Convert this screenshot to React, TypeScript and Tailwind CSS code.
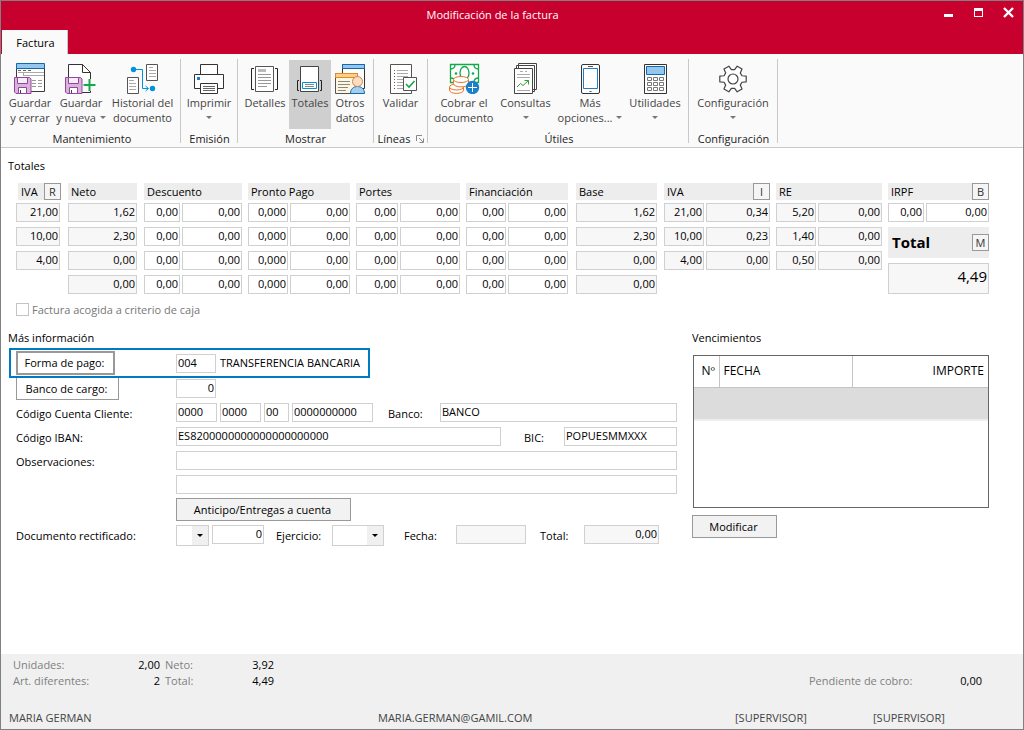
import type { ReactNode } from 'react';

const DROP = <span className="inline-block border-x-3 border-t-3 border-x-transparent border-t-[#777]" />;

// ---------- icons ----------

const Floppy = () => (
  <g>
    <path d="M.5 15.500h15l1.500 1.500v14.500H2L.5 30z" fill="#d9b3dc" stroke="#93479b" />
    <path d="M3.500 15.500h10v6h-10z" fill="#f6eef7" stroke="#93479b" />
    <path d="M4.500 25.500h8v6h-8z" fill="#fff" stroke="#93479b" />
    <path d="M6.500 28v3" stroke="#444" />
  </g>
);

const SaveCloseIcon = () => (
  <svg width="32" height="32" viewBox="0 0 32 32" fill="none">
    <path d="M2.500 6v23.500h28V6" fill="#fff" stroke="#3a3a3a" />
    <path d="M2.500 1.500h28v5h-28z" fill="#93c7ee" stroke="#1468ac" />
    <path d="M4 8.500h3m2 0h3m2 0h3" stroke="#666" />
    <path d="M4 10.500h26M9.500 11v3M10 13.500h20" stroke="#aaa" />
    <path d="M18 18.500h4m2 0h4M18 21.500h4m2 0h4M18 24.500h4m2 0h4" stroke="#999" />
    <Floppy />
  </svg>
);

const SaveNewIcon = () => (
  <svg width="32" height="32" viewBox="0 0 32 32" fill="none">
    <path d="M3.500 2.500h14l8 8v20h-22z" fill="#fff" stroke="#333" />
    <path d="M17.500 2.500v8h8" stroke="#333" />
    <path d="M18 17h14v12H18z" fill="#fafafa" />
    <path d="M24.500 17v12M18.500 23h12" stroke="#15a84a" strokeWidth="2" />
    <Floppy />
  </svg>
);

const HistoryIcon = () => (
  <svg width="32" height="32" viewBox="0 0 32 32" fill="none">
    <path d="M.5 15.500h11v16H.5zM19.500 2.500h11v16h-11z" fill="#fff" stroke="#555" />
    <path d="M2 18.500h5M2 21.500h7M2 24.500h7M2 27.500h7M22 5.500h4M22 8.500h7M22 11.500h7M22 14.500h7" stroke="#aaa" />
    <path d="M7 7.500h8.500v19H21M18.500 24l3 2.500-3 2.500" stroke="#0093dd" />
    <circle cx="6.500" cy="7.500" r="2.700" fill="#0093dd" />
    <circle cx="25.500" cy="26.500" r="2.700" fill="#0093dd" />
  </svg>
);

const PrinterIcon = () => (
  <svg width="32" height="32" viewBox="0 0 32 32" fill="none" stroke="#333">
    <path d="M7.500 12.500v-10h17v10" fill="#fff" />
    <path d="M1.500 12.500h29v14h-29z" fill="#fff" />
    <path d="M7.500 21.500h17v10h-17z" fill="#fff" />
    <path d="M10 24.500h12M10 26.500h12M10 28.500h12" stroke="#666" />
    <path d="M4 15h3v3H4z" fill="#1b80c9" stroke="none" />
  </svg>
);

const DetailsIcon = () => (
  <svg width="32" height="32" viewBox="0 0 32 32" fill="none">
    <path d="M6.500 4.500h18v25h-18z" fill="#fff" stroke="#555" />
    <path d="M9 7h8v3H9z" fill="#bbb" />
    <path d="M9 12.500h13M9 15.500h13M9 18.500h13M9 21.500h13M9 24.500h9" stroke="#999" />
    <path d="M5 6.500H2.500v21H5M26 6.500h2.500v21H26" stroke="#222" />
  </svg>
);

const TotalsIcon = () => (
  <svg width="32" height="32" viewBox="0 0 32 32" fill="none">
    <path d="M6.500 4.500h18v25h-18z" fill="#fff" stroke="#444" />
    <path d="M8.500 20.500h14v6h-14z" fill="#fff" stroke="#0093dd" />
    <path d="M11 22.500h9M11 24.500h9" stroke="#888" />
    <path d="M5 18.500H3.500v10H5M26 18.500h1.500v10H26" stroke="#222" />
  </svg>
);

const OtherDataIcon = () => (
  <svg width="32" height="32" viewBox="0 0 32 32" fill="none">
    <path d="M8.500 2.500h22v24h-22z" fill="#fff" stroke="#333" />
    <path d="M8.500 2.500h22v4h-22z" fill="#93c7ee" stroke="#1468ac" />
    <path d="M1.500 11.500h22v20h-22z" fill="#fff6df" stroke="#555" />
    <path d="M1.500 11.500h22v4h-22z" fill="#fbd18a" stroke="#e08a2c" />
    <path d="M4 19.500h12M4 22.500h12M4 25.500h10M4 28.500h8" stroke="#888" />
    <path d="M16.500 31.500c0-4.500 3-7 7-7s7 2.500 7 7z" fill="#a5cdee" stroke="#1468ac" />
    <circle cx="23.500" cy="19.500" r="5" fill="#fddcc0" stroke="#c78a5a" />
  </svg>
);

const ValidateIcon = () => (
  <svg width="32" height="32" viewBox="0 0 32 32" fill="none">
    <path d="M5.500 2.500h21v29h-21z" fill="#fff" stroke="#555" />
    <path d="M12 8.500h11M12 11.500h11M12 14.500h11M12 17.500h6M12 20.500h6M12 23.500h6M12 26.500h6" stroke="#aaa" />
    <path d="M9.500 8v1m0 8v1m0 5v1" stroke="#15a84a" />
    <path d="M9.500 11v1m0 2v1m0 5v1m0 5v1" stroke="#c02020" />
    <path d="M18.500 15.500h13v13h-13z" fill="#fff" stroke="#555" />
    <path d="M21 22l3 3 5.500-6" stroke="#15a84a" strokeWidth="1.600" />
  </svg>
);

const CollectIcon = () => (
  <svg width="32" height="32" viewBox="0 0 32 32" fill="none">
    <path d="M2.500 2.500h28v18h-28z" fill="#fff" stroke="#15a84a" strokeWidth="1.300" />
    <path d="M2.500 7c3 0 4.500-1.500 4.500-4.500M26 2.500c0 3 1.500 4.500 4.500 4.500M2.500 16c3 0 4.500 1.500 4.500 4.500M26 20.500c0-3 1.500-4.500 4.500-4.500" stroke="#15a84a" strokeWidth="1.300" />
    <ellipse cx="16.500" cy="11" rx="4.500" ry="6.500" stroke="#15a84a" strokeWidth="1.300" />
    <circle cx="8" cy="11.500" r="1.300" fill="#15a84a" />
    <circle cx="25" cy="11.500" r="1.300" fill="#15a84a" />
    <g fill="#fff" stroke="#e8762c">
      <path d="M1.500 25v3c0 4.500 14 4.500 14 0v-3" />
      <ellipse cx="8.500" cy="25" rx="7" ry="3" />
      <path d="M5.500 17.500v4c0 4.500 15 4.500 15 0v-4" />
      <ellipse cx="13" cy="17.500" rx="7.500" ry="3" />
    </g>
    <circle cx="24.500" cy="25.500" r="6.700" fill="#1b80c9" />
    <path d="M24.500 21v9M20 25.500h9" stroke="#fff" />
  </svg>
);

const QueriesIcon = () => (
  <svg width="32" height="32" viewBox="0 0 32 32" fill="none">
    <path d="M8.500 1.500h18v26h-18zM6.500 3.500h18v26h-18z" fill="#fff" stroke="#444" />
    <path d="M4.500 6.500h18v25h-18z" fill="#fff" stroke="#444" />
    <path d="M10 9.500h3m2 0h2M7 12.500h13M7 15.500h13M7 28.500h13" stroke="#aaa" />
    <path d="M7 25l3.500-3.500 2.500 2 5.500-5M14.500 18.500h4v4" stroke="#2f9e2f" />
  </svg>
);

const PhoneIcon = () => (
  <svg width="32" height="32" viewBox="0 0 32 32" fill="none">
    <rect x="7.500" y="2.500" width="18" height="29" rx="1.500" fill="#fff" stroke="#333" />
    <path d="M9.500 6.500h14v20h-14z" stroke="#1b80c9" />
    <path d="M14 4.500h5M15.500 29.500h2" stroke="#555" />
  </svg>
);

const CalculatorIcon = () => (
  <svg width="32" height="32" viewBox="0 0 32 32" fill="none">
    <path d="M5.500 2.500h22v29h-22z" fill="#fff" stroke="#333" />
    <path d="M7.500 4.500h18v8h-18z" fill="#93c7ee" stroke="#1468ac" />
    <path
      d="M8.500 15.500h4v3h-4zM14.500 15.500h4v3h-4zM20.500 15.500h4v3h-4zM8.500 20.500h4v3h-4zM14.500 20.500h4v3h-4zM20.500 20.500h4v3h-4zM8.500 25.500h4v3h-4zM14.500 25.500h4v3h-4zM20.500 25.500h4v3h-4z"
      stroke="#777"
    />
  </svg>
);

// six teeth, four points each
const gearPoints = [0, 60, 120, 180, 240, 300]
  .flatMap((t) => [[t - 20, 9.5], [t - 12, 13.5], [t + 12, 13.5], [t + 20, 9.5]])
  .map(([a, r]) => {
    const rad = (a * Math.PI) / 180;
    return `${(16 + r * Math.cos(rad)).toFixed(2)},${(17 + r * Math.sin(rad)).toFixed(2)}`;
  })
  .join(' ');

const GearIcon = () => (
  <svg width="32" height="32" viewBox="0 0 32 32" fill="#fff" stroke="#444" strokeWidth="1.200" strokeLinejoin="round">
    <polygon points={gearPoints} />
    <circle cx="16" cy="17" r="5" />
  </svg>
);

// ---------- ribbon ----------

type RibbonButtonProps = { icon: ReactNode; lines: string[]; drop?: boolean; active?: boolean; className: string };

const RibbonButton = ({ icon, lines, drop, active, className }: RibbonButtonProps) => (
  <button
    type="button"
    className={`flex h-[69px] flex-col items-center pt-[2px] leading-[15px] whitespace-nowrap text-[#444] ${active ? 'bg-[#cfcfcf]' : ''} ${className}`}
  >
    {icon}
    <span className="mt-[1px]">{lines[0]}</span>
    <span className="flex items-center gap-1">
      {lines[1]}
      {drop && <span className="flex h-[15px] items-center">{DROP}</span>}
    </span>
  </button>
);

const RibbonGroup = ({ title, className, launcher, children }: { title: string; className: string; launcher?: boolean; children: ReactNode }) => (
  <div className={`flex shrink-0 flex-col justify-between border-r border-[#c8c8c8] ${className}`}>
    <div className="flex justify-center pt-[1px]">{children}</div>
    <div className="flex items-center justify-center gap-[6px] pl-[1px] leading-[9px] text-[#222]">
      {title}
      {launcher && (
        <svg width="8" height="8" viewBox="0 0 8 8" fill="none" stroke="#888">
          <path d="M.5 6V.5H6M3 3l4 4M7.500 3.500v4h-4" />
        </svg>
      )}
    </div>
  </div>
);

// ---------- form pieces ----------

const FIELD = 'h-[19px] min-w-0 border border-[#d0d0d0] px-[1px] pb-[2px] text-black outline-none';

type FieldProps = { label?: string; id?: string; value?: string; gray?: boolean; right?: boolean; className?: string };

const Field = ({ label, id, value = '', gray, right, className = '' }: FieldProps) => (
  <input
    id={id}
    aria-label={label}
    defaultValue={value}
    readOnly={gray}
    className={`${FIELD} ${gray ? 'bg-[#f7f7f7]' : 'bg-white'} ${right ? 'text-right' : ''} ${className}`}
  />
);

const KeyButton = ({ children }: { children: string }) => (
  <button type="button" className="h-[17px] w-[17px] border border-[#999] bg-[#f5f5f5] leading-[14px] text-[#333]">
    {children}
  </button>
);

const PushButton = ({ children, className }: { children: string; className: string }) => (
  <button type="button" className={`border-[#999] pt-[1px] pr-[2px] whitespace-nowrap text-black ${className}`}>
    {children}
  </button>
);

const Combo = ({ id, label, className }: { id?: string; label?: string; className: string }) => (
  <span className={`relative inline-flex h-[21px] ${className}`}>
    <select id={id} aria-label={label} className="w-full appearance-none border border-[#d0d0d0] bg-white outline-none">
      <option value=""></option>
    </select>
    <span className="pointer-events-none absolute inset-y-[1px] right-[1px] flex w-4 items-center justify-center bg-[#f0f0f0]">
      <span className="border-x-3 border-t-3 border-x-transparent border-t-black" />
    </span>
  </span>
);

type Column = { title: string; k?: string; gray?: boolean; first?: string; className?: string; head?: string; rows: string[][] };

const same = (row: string[], n: number) => Array.from({ length: n }, () => row);

const columns: Column[] = [
  { title: 'IVA', k: 'R', gray: true, className: 'pr-[2px]', head: 'ml-[2px] -mr-[1px]', rows: [['21,00'], ['10,00'], ['4,00']] },
  { title: 'Neto', gray: true, className: 'pr-[1px]', rows: [['1,62'], ['2,30'], ['0,00'], ['0,00']] },
  { title: 'Descuento', first: 'w-9', rows: same(['0,00', '0,00'], 4) },
  { title: 'Pronto Pago', first: 'w-10', rows: same(['0,000', '0,00'], 4) },
  { title: 'Portes', first: 'w-[42px]', rows: same(['0,00', '0,00'], 4) },
  { title: 'Financiación', first: 'w-10', className: 'pr-[2px]', rows: same(['0,00', '0,00'], 4) },
  { title: 'Base', gray: true, className: 'pr-[1px]', rows: [['1,62'], ['2,30'], ['0,00'], ['0,00']] },
  { title: 'IVA', k: 'I', gray: true, first: 'w-10', rows: [['21,00', '0,34'], ['10,00', '0,23'], ['4,00', '0,00']] },
  { title: 'RE', gray: true, first: 'w-10', rows: [['5,20', '0,00'], ['1,40', '0,00'], ['0,50', '0,00']] },
];

const ColumnHead = ({ title, k, className = '' }: { title: string; k?: string; className?: string }) => (
  <div className={`mb-[3px] flex h-[17px] items-center justify-between bg-[#ededed] pl-[3px] leading-[17px] ${className}`}>
    <span>{title}</span>
    {k && <KeyButton>{k}</KeyButton>}
  </div>
);

const TotalsColumn = ({ title, k, gray, first, className = '', head, rows }: Column) => (
  <div className={`min-w-0 ${className}`}>
    <ColumnHead title={title} k={k} className={head} />
    <div className="flex flex-col gap-[5px]">
      {rows.map((row, i) => (
        <div key={i} className="flex gap-[2px]">
          {row.map((value, j) => (
            <Field
              key={j}
              label={`${title} ${i + 1}`}
              value={value}
              gray={gray}
              right
              className={j === 0 && first ? `${first} shrink-0` : 'w-full flex-1'}
            />
          ))}
        </div>
      ))}
    </div>
  </div>
);

const TotalsPanel = () => (
  <section className="pr-[34px] pl-[15px]">
    <div className="grid grid-cols-[46fr_70fr_98fr_102fr_104fr_104fr_82fr_106fr_106fr_101fr] gap-x-[6px]">
      {columns.map((column, i) => (
        <TotalsColumn key={i} {...column} />
      ))}
      <div className="min-w-0">
        <ColumnHead title="IRPF" k="B" />
        <div className="flex gap-[2px]">
          <Field label="IRPF %" value="0,00" right className="w-9 shrink-0" />
          <Field label="IRPF" value="0,00" right className="w-full flex-1" />
        </div>
        <div className="mt-[5px] flex h-[31px] items-center justify-between bg-[#ededed] pl-1">
          <label htmlFor="total" className="text-[15px] font-bold">Total</label>
          <KeyButton>M</KeyButton>
        </div>
        <input
          id="total"
          readOnly
          defaultValue="4,49"
          className="mt-[5px] h-[31px] w-full border border-[#d0d0d0] bg-[#f7f7f7] px-[1px] pb-[6px] text-right text-[15px] outline-none"
        />
      </div>
    </div>
    <label className="mt-2 flex items-center gap-[3px] leading-[15px] text-[#777]">
      <input type="checkbox" disabled className="h-[13px] w-[13px] appearance-none border border-[#c4c4c4] bg-white" />
      Factura acogida a criterio de caja
    </label>
  </section>
);

const InfoPanel = () => (
  <section className="min-w-0 flex-1">
    <h2 className="pl-[7px] leading-[15px]">Más información</h2>
    <div className="mt-[3px] ml-2 flex h-[30px] w-[361px] items-center border-2 border-[#007ac2] pl-[5px]">
      <PushButton className="h-6 w-[99px] border-2 bg-white">Forma de pago:</PushButton>
      <Field label="Forma de pago" value="004" className="ml-[61px] w-10" />
      <span className="pl-1">TRANSFERENCIA BANCARIA</span>
    </div>
    <div className="flex h-[25px] pl-[15px]">
      <PushButton className="h-[22px] w-[103px] border border-t-0 bg-white">Banco de cargo:</PushButton>
      <Field label="Banco de cargo" value="0" right className="mt-[1px] ml-[57px] w-10" />
    </div>
    <div className="flex h-6 pl-[15px]">
      <label htmlFor="ccc" className="w-40 leading-[21px]">Código Cuenta Cliente:</label>
      <div className="flex flex-1 gap-[3px]">
        <Field id="ccc" value="0000" className="w-[41px]" />
        <Field label="Oficina" value="0000" className="w-[41px]" />
        <Field label="DC" value="00" className="w-[25px]" />
        <Field label="Cuenta" value="0000000000" className="w-[81px]" />
        <label htmlFor="banco" className="ml-3 w-[49px] leading-[21px]">Banco:</label>
        <Field id="banco" value="BANCO" className="flex-1" />
      </div>
    </div>
    <div className="flex h-6 pl-[15px]">
      <label htmlFor="iban" className="w-40 leading-[21px]">Código IBAN:</label>
      <Field id="iban" value="ES8200000000000000000000" className="flex-1" />
      <label htmlFor="bic" className="ml-[23px] w-10 leading-[21px]">BIC:</label>
      <Field id="bic" value="POPUESMMXXX" className="w-[113px]" />
    </div>
    <div className="flex h-6 pl-[15px]">
      <label htmlFor="obs1" className="w-40 leading-[21px]">Observaciones:</label>
      <Field id="obs1" className="flex-1" />
    </div>
    <div className="flex h-[23px] pl-[175px]">
      <Field label="Observaciones 2" className="flex-1" />
    </div>
    <div className="flex h-[27px] pl-[175px]">
      <PushButton className="h-[23px] w-[175px] border bg-[#f2f2f2]">Anticipo/Entregas a cuenta</PushButton>
    </div>
    <div className="flex pl-[15px]">
      <label htmlFor="doc" className="w-40 leading-[21px]">Documento rectificado:</label>
      <Combo id="doc" className="w-[33px]" />
      <Field label="Número" value="0" right className="ml-[3px] w-[52px]" />
      <label htmlFor="ejercicio" className="ml-3 w-14 leading-[21px]">Ejercicio:</label>
      <Combo id="ejercicio" className="w-[52px]" />
      <label htmlFor="fecha" className="ml-5 w-[52px] leading-[21px]">Fecha:</label>
      <Field id="fecha" gray className="w-[70px]" />
      <label htmlFor="importe" className="ml-[14px] w-11 leading-[21px]">Total:</label>
      <Field id="importe" value="0,00" gray right className="w-[75px]" />
    </div>
  </section>
);

const DuePanel = () => (
  <section className="mr-[34px] w-[297px] shrink-0">
    <h2 className="leading-[15px]">Vencimientos</h2>
    <div className="mt-[10px] ml-[1px] h-[153px] border border-[#666]">
      <table className="w-full table-fixed border-collapse text-xs">
        <thead>
          <tr className="h-[31px] border-b border-[#c4c4c4]">
            <th className="w-[25px] border-r border-[#c4c4c4] pl-1 text-center font-normal">Nº</th>
            <th className="w-[133px] border-r border-[#c4c4c4] pl-1 text-left font-normal">FECHA</th>
            <th className="pr-1 text-right font-normal">IMPORTE</th>
          </tr>
        </thead>
        <tbody>
          <tr className="h-[33px] border-b-2 border-[#eee] bg-[#dcdcdc]">
            <td />
            <td />
            <td />
          </tr>
        </tbody>
      </table>
    </div>
    <PushButton className="mt-[7px] h-[23px] w-[85px] border bg-[#f2f2f2]">Modificar</PushButton>
  </section>
);

const StatusBar = () => (
  <footer className="bg-[#f0f0f0] pt-[3px] pb-[3px] leading-4 text-[#444]">
    <div className="flex justify-between pr-[41px] pl-3">
      <dl className="grid grid-cols-[100px_47px_63px_51px] text-[#808080]">
        <dt>Unidades:</dt>
        <dd className="text-right text-black">2,00</dd>
        <dt className="pl-[5px]">Neto:</dt>
        <dd className="text-right text-black">3,92</dd>
        <dt>Art. diferentes:</dt>
        <dd className="text-right text-black">2</dd>
        <dt className="pl-[5px]">Total:</dt>
        <dd className="text-right text-black">4,49</dd>
      </dl>
      <dl className="flex items-end gap-12 text-[#808080]">
        <dt>Pendiente de cobro:</dt>
        <dd className="text-black">0,00</dd>
      </dl>
    </div>
    <div className="mt-5 grid grid-cols-[369fr_357fr_138fr_150fr] pl-2 leading-[17px]">
      <span>MARIA GERMAN</span>
      <span>MARIA.GERMAN@GAMIL.COM</span>
      <span>[SUPERVISOR]</span>
      <span>[SUPERVISOR]</span>
    </div>
  </footer>
);

export default function App() {
  return (
    <div className="flex min-h-screen flex-col border border-[#808080] bg-white font-['Open_Sans',sans-serif] text-[11px] text-black">
      <header className="bg-[#c8002d]">
        <div className="flex h-[29px] items-center">
          <div className="w-24" />
          <h1 className="flex-1 pr-[52px] text-center text-white">Modificación de la factura</h1>
          <div className="flex gap-[14px] pr-[7px] pb-[5px] text-white">
            <button type="button" aria-label="Minimizar" className="h-4 w-4">
              <svg width="16" height="16" viewBox="0 0 16 16"><path d="M4 9h9v3H4z" fill="#fff" /></svg>
            </button>
            <button type="button" aria-label="Maximizar" className="h-4 w-4">
              <svg width="16" height="16" viewBox="0 0 16 16"><path d="M4 3h9v9H4zM5 6v5h7V6z" fill="#fff" fillRule="evenodd" /></svg>
            </button>
            <button type="button" aria-label="Cerrar" className="h-4 w-4">
              <svg width="16" height="16" viewBox="0 0 16 16"><path d="M4 3l9 9M13 3l-9 9" stroke="#fff" strokeWidth="2.400" /></svg>
            </button>
          </div>
        </div>
        <nav className="flex pl-[1px]">
          <button type="button" className="h-6 w-[66px] border-r border-[#c8c8c8] bg-[#fafafa] pt-[2px] pl-[2px] text-black">Factura</button>
        </nav>
      </header>

      <div className="flex h-[94px] overflow-hidden border-b border-[#c8c8c8] bg-[#fafafa] pt-[5px] pb-1">
        <RibbonGroup title="Mantenimiento" className="w-[180px] pl-[2px]">
          <RibbonButton icon={<SaveCloseIcon />} lines={['Guardar', 'y cerrar']} className="w-[50px]" />
          <RibbonButton icon={<SaveNewIcon />} lines={['Guardar', 'y nueva']} drop className="w-[52px]" />
          <RibbonButton icon={<HistoryIcon />} lines={['Historial del', 'documento']} className="w-[71px]" />
        </RibbonGroup>
        <RibbonGroup title="Emisión" className="w-[57px]">
          <RibbonButton icon={<PrinterIcon />} lines={['Imprimir', '']} drop className="w-[50px]" />
        </RibbonGroup>
        <RibbonGroup title="Mostrar" className="w-[136px] pr-[1px]">
          <RibbonButton icon={<DetailsIcon />} lines={['Detalles']} className="w-12" />
          <RibbonButton icon={<TotalsIcon />} lines={['Totales']} active className="w-[42px]" />
          <RibbonButton icon={<OtherDataIcon />} lines={['Otros', 'datos']} className="w-[38px]" />
        </RibbonGroup>
        <RibbonGroup title="Líneas" launcher className="w-[54px]">
          <RibbonButton icon={<ValidateIcon />} lines={['Validar']} className="w-11" />
        </RibbonGroup>
        <RibbonGroup title="Útiles" className="w-[261px] pl-[1px]">
          <RibbonButton icon={<CollectIcon />} lines={['Cobrar el', 'documento']} className="w-16" />
          <RibbonButton icon={<QueriesIcon />} lines={['Consultas', '']} drop className="w-[59px]" />
          <RibbonButton icon={<PhoneIcon />} lines={['Más', 'opciones...']} drop className="w-[70px]" />
          <RibbonButton icon={<CalculatorIcon />} lines={['Utilidades', '']} drop className="w-[60px]" />
        </RibbonGroup>
        <RibbonGroup title="Configuración" className="w-[89px]">
          <RibbonButton icon={<GearIcon />} lines={['Configuración', '']} drop className="w-20" />
        </RibbonGroup>
      </div>

      <main className="flex-1 pt-[10px]">
        <h2 className="mb-[10px] pl-[7px] leading-[15px]">Totales</h2>
        <TotalsPanel />
        <div className="mt-[13px] flex gap-[15px]">
          <InfoPanel />
          <DuePanel />
        </div>
      </main>

      <StatusBar />
    </div>
  );
}
